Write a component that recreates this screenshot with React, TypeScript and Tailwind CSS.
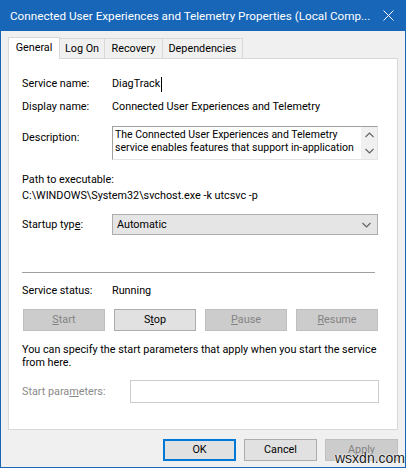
import React from 'react';

const Chevron: React.FC<{ up?: boolean; className?: string }> = ({ up, className }) => (
  <svg width="9" height="6" viewBox="0 0 9 6" className={className}>
    <path
      d={up ? 'M0.5 5 L4.5 1 L8.5 5' : 'M0.5 1 L4.5 5 L8.5 1'}
      fill="none"
      stroke="#606060"
      strokeWidth="1.1"
    />
  </svg>
);

const Tab: React.FC<{ label: string; selected?: boolean; w: string }> = ({ label, selected, w }) =>
  selected ? (
    <div className={`${w} h-[22px] -mb-px relative z-10 bg-white border border-b-0 border-[#d9d9d9] flex items-center justify-center pb-[1px]`}>
      {label}
    </div>
  ) : (
    <div className={`${w} h-[20px] bg-[#f0f0f0] border border-l-0 border-b-0 border-[#d9d9d9] flex items-center justify-center`}>
      {label}
    </div>
  );

const SmallButton: React.FC<{ children: React.ReactNode; disabled?: boolean; w?: string }> = ({
  children,
  disabled,
  w = 'w-[82px]',
}) => (
  <div
    className={`${w} h-[22px] flex items-center justify-center border ${
      disabled ? 'bg-[#cccccc] border-[#bfbfbf] text-[#838383]' : 'bg-[#e1e1e1] border-[#adadad] text-black'
    }`}
  >
    {children}
  </div>
);

export default function App() {
  return (
    <div className="w-[406px] h-[468px] bg-[#f0f0f0] border border-t-0 border-[#1766b8] flex flex-col text-[10.8px] leading-[16px] text-black font-['Roboto',sans-serif] relative overflow-hidden">
      {/* title bar */}
      <div className="h-[31px] bg-[#1766b8] -mx-px flex items-center pl-[10px] pr-[10px] text-white">
        <span className="flex-1 whitespace-nowrap text-[11.7px]">
          Connected User Experiences and Telemetry Properties (Local Comp...
        </span>
        <svg width="11" height="11" viewBox="0 0 11 11" className="mr-[2px]">
          <path d="M0.5 0.5 L10.5 10.5 M10.5 0.5 L0.5 10.5" stroke="#ffffff" strokeWidth="1" />
        </svg>
      </div>

      {/* tabs */}
      <div className="mt-[6px] ml-[7px] h-[21px] flex items-end">
        <Tab label="General" selected w="w-[52px]" />
        <Tab label="Log On" w="w-[45px]" />
        <Tab label="Recovery" w="w-[58px]" />
        <Tab label="Dependencies" w="w-[80px]" />
      </div>

      {/* tab panel */}
      <div className="ml-[7px] w-[390px] h-[372px] bg-white border border-[#d9d9d9] pl-[13px] flex flex-col">
        <div className="mt-[17px] flex h-[16px]">
          <span className="w-[90px]">Service name:</span>
          <span className="flex items-center">
            DiagTrack<span className="inline-block w-px h-[15px] bg-black ml-[1px]" />
          </span>
        </div>

        <div className="mt-[7px] flex h-[16px]">
          <span className="w-[90px]">Display name:</span>
          <span>Connected User Experiences and Telemetry</span>
        </div>

        <div className="mt-[11px] flex">
          <span className="w-[90px] pt-[4px]">Description:</span>
          <div className="w-[266px] h-[34px] border border-[#a0a0a0] border-r-[#e3e3e3] border-b-[#e3e3e3] bg-white flex">
            <div className="flex-1 h-[32px] pl-[2px] pt-[1px] text-[10.5px] leading-[13px] overflow-hidden whitespace-nowrap">
              The Connected User Experiences and Telemetry
              <br />
              service enables features that support in-application
            </div>
            <div className="w-[16px] bg-[#f0f0f0] flex flex-col items-center justify-between py-[5px]">
              <Chevron up />
              <Chevron />
            </div>
          </div>
        </div>

        <div className="mt-[12px] h-[16px]">Path to executable:</div>
        <div className="h-[16px]">C:\WINDOWS\System32\svchost.exe -k utcsvc -p</div>

        <div className="mt-[10px] flex items-center">
          <span className="w-[90px]">
            Startup typ<span className="underline">e</span>:
          </span>
          <div className="w-[266px] h-[21px] bg-[#e5e5e5] border border-[#adadad] flex items-center pl-[4px] pr-[6px]">
            <span className="flex-1">Automatic</span>
            <Chevron />
          </div>
        </div>

        <div className="mt-[37px] w-[353px] h-px bg-[#a0a0a0]" />

        <div className="mt-[10px] flex h-[16px]">
          <span className="w-[90px]">Service status:</span>
          <span>Running</span>
        </div>

        <div className="mt-[10px] flex gap-[9px] pl-px">
          <SmallButton disabled>
            <span className="underline">S</span>tart
          </SmallButton>
          <SmallButton>
            S<span className="underline">t</span>op
          </SmallButton>
          <SmallButton disabled>
            <span className="underline">P</span>ause
          </SmallButton>
          <SmallButton disabled>
            <span className="underline">R</span>esume
          </SmallButton>
        </div>

        <div className="mt-[12px] leading-[13px] whitespace-nowrap">
          You can specify the start parameters that apply when you start the service
          <br />
          from here.
        </div>

        <div className="mt-[11px] flex items-center">
          <span className="w-[108px] text-[#8a8a8a]">
            Start para<span className="underline">m</span>eters:
          </span>
          <div className="w-[249px] h-[23px] border border-[#cccccc] bg-white" />
        </div>
      </div>

      {/* dialog buttons */}
      <div className="mt-[9px] flex justify-end gap-[8px] pr-[7px]">
        <div className="w-[73px] h-[22px] bg-[#e1e1e1] border-2 border-[#0078d7] flex items-center justify-center">
          OK
        </div>
        <SmallButton w="w-[73px]">Cancel</SmallButton>
        <SmallButton disabled w="w-[73px]">
          Apply
        </SmallButton>
      </div>

      {/* watermark */}
      <div className="absolute left-[334px] top-[450px] text-[14px] leading-[16px] text-[#1a1a1a] font-['Liberation_Sans',sans-serif] [text-shadow:0_0_2px_#ffffff,0_0_2px_#ffffff]">
        wsxdn.com
      </div>
    </div>
  );
}
